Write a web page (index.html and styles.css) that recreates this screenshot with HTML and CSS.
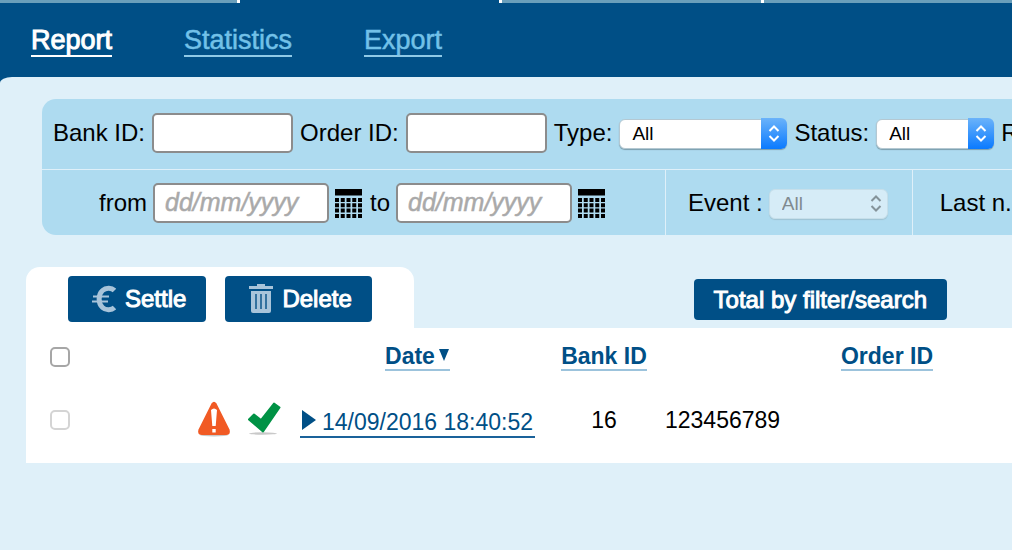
FILE: index.html
```html
<!DOCTYPE html>
<html lang="en">
<head>
<meta charset="utf-8">
<title>Report</title>
<link rel="stylesheet" href="styles.css">
</head>
<body>
<header class="header">
  <div class="top-tabs"><span class="top-tab"></span><span class="top-tab top-tab-active"></span><span class="top-tab"></span><span class="top-tab top-tab-last"></span></div>
  <nav class="nav">
    <a class="nav-link nav-current" href="#report">Report</a>
    <a class="nav-link" href="#statistics">Statistics</a>
    <a class="nav-link" href="#export">Export</a>
  </nav>
</header>
<main class="main">
  <form class="filters">
    <div class="filter-row">
      <label for="bank-id">Bank ID:</label>
      <input class="field" id="bank-id" type="text">
      <label for="order-id">Order ID:</label>
      <input class="field" id="order-id" type="text">
      <label for="type">Type:</label>
      <span class="picker picker-wide">
        <select class="select" id="type"><option>All</option></select>
        <svg class="picker-cap" viewBox="0 0 26 30" aria-hidden="true"><path d="M8.500 12.500 13 8 17.500 12.500M8.500 17.500 13 22 17.500 17.500"/></svg>
      </span>
      <label for="status">Status:</label>
      <span class="picker picker-narrow">
        <select class="select" id="status"><option>All</option></select>
        <svg class="picker-cap" viewBox="0 0 26 30" aria-hidden="true"><path d="M8.500 12.500 13 8 17.500 12.500M8.500 17.500 13 22 17.500 17.500"/></svg>
      </span>
      <span>R</span>
    </div>
    <div class="filter-row filter-row-split">
      <div class="cell cell-dates">
        <label for="from">from</label>
        <input class="field field-date" id="from" type="text" placeholder="dd/mm/yyyy">
        <button class="calendar" type="button" aria-label="Pick start date"><svg class="calendar-icon" viewBox="0 0 27 29"><path d="M0 0H27V6.500H0Z"/><path class="days" d="M0 11H27M0 16.300H27M0 21.600H27M0 26.900H27"/></svg></button>
        <label for="to">to</label>
        <input class="field field-date" id="to" type="text" placeholder="dd/mm/yyyy">
        <button class="calendar" type="button" aria-label="Pick end date"><svg class="calendar-icon" viewBox="0 0 27 29"><path d="M0 0H27V6.500H0Z"/><path class="days" d="M0 11H27M0 16.300H27M0 21.600H27M0 26.900H27"/></svg></button>
      </div>
      <div class="cell cell-event">
        <label for="event">Event :</label>
        <span class="picker picker-off">
          <select class="select" id="event" disabled><option>All</option></select>
          <svg class="picker-cap" viewBox="0 0 26 30" aria-hidden="true"><path d="M9.500 12.500 14 8 18.500 12.500M9.500 17.500 14 22 18.500 17.500"/></svg>
        </span>
      </div>
      <div class="cell cell-last">Last n.</div>
    </div>
  </form>

  <section class="results">
    <div class="toolbar">
      <div class="actions">
        <button class="button" type="button"><svg class="euro" viewBox="0 0 24 28" aria-hidden="true"><path class="euro-arc" d="M22.500 5.500C20 2.800 14 2.200 10.500 5.500C6 9.500 6 18.500 10.500 22.500C14 25.800 20 25 22.500 22.500"/><path class="euro-bars" d="M1 11.500H17M0 16.500H16"/></svg>Settle</button>
        <button class="button" type="button"><svg class="bin" viewBox="0 0 24 30" aria-hidden="true"><path class="bin-lid" d="M8 0H16V2H24V5H0V2H8Z"/><path class="bin-body" d="M2 7H22V27Q22 29 20 29H4Q2 29 2 27Z"/><path class="bin-slots" d="M7 10V25M12 10V25M17 10V25"/></svg>Delete</button>
      </div>
      <button class="button button-total" type="button">Total by filter/search</button>
    </div>
    <div class="table-wrap">
      <table class="table">
        <colgroup><col class="col-check"><col class="col-icons"><col class="col-date"><col class="col-bank"><col class="col-order"></colgroup>
        <thead>
          <tr>
            <th><input class="check" type="checkbox" aria-label="Select all"></th>
            <th></th>
            <th><a class="sort" href="#date">Date<svg class="arrow-down" viewBox="0 0 12 16" aria-hidden="true"><path d="M1 1H11L6 13Z"/></svg></a></th>
            <th><a class="sort" href="#bank">Bank ID</a></th>
            <th><a class="sort" href="#order">Order ID</a></th>
          </tr>
        </thead>
        <tbody>
          <tr>
            <td><input class="check" type="checkbox" aria-label="Select order 123456789" disabled></td>
            <td class="icons">
              <svg class="warning" viewBox="0 0 34 36" role="img" aria-label="Warning"><ellipse class="shade" cx="17" cy="34" rx="14" ry="1.500"/><path class="warning-body" d="M14.500 2.500Q17 -1 19.500 2.500L32.500 28.500Q34 34 29 34H5Q0 34 1.500 28.500Z"/><path class="mark" d="M14 9Q17 6 20 9L18.700 25H15.300ZM15.300 28H18.700V31.500H15.300Z"/></svg>
              <svg class="tick" viewBox="0 0 34 34" role="img" aria-label="Confirmed"><ellipse class="shade" cx="16" cy="31.500" rx="14" ry="1.200"/><path class="tick-body" d="M2 17.500 7 12.500 14 18 27 1.500 32.500 5.500 16 29.500Z"/></svg>
            </td>
            <td class="date"><a class="record" href="#record"><svg class="arrow-right" viewBox="0 0 14 20" aria-hidden="true"><path d="M0 0 14 10 0 20Z"/></svg>14/09/2016 18:40:52</a></td>
            <td>16</td>
            <td class="order">123456789</td>
          </tr>
        </tbody>
      </table>
    </div>
  </section>
</main>
</body>
</html>
```
FILE: styles.css
```css
* { box-sizing: border-box; }

body {
  margin: 0;
  min-height: 100vh;
  overflow: hidden;
  background: #004f86;
  color: #000;
  font-family: "Liberation Sans", Arial, sans-serif;
  font-size: 24px;
  line-height: 28px;
}

input, select, button { font-family: inherit; margin: 0; }

/* Header */
.top-tabs { display: flex; height: 3px; }
.top-tab { flex: 0 0 262px; background: #6a9fbb; border-right: 3px solid #fff; }
.top-tab:first-child { flex-basis: 240px; }
.top-tab-active { background: #004f86; }
.top-tab-last { flex: 1; border-right: 0; }

.nav { display: flex; gap: 72px; padding: 22px 31px 20px; }
.nav-link {
  color: #72c1e8;
  font-size: 27px;
  line-height: 30px;
  text-decoration: none;
  border-bottom: 2px solid #8fc9e6;
  -webkit-text-stroke: 0.5px currentColor;
}
.nav-current { color: #fff; border-color: #fff; -webkit-text-stroke-width: 1px; }

.main {
  min-height: calc(100vh - 77px);
  padding: 22px 0 40px;
  background: #dff0f9;
  border-top-left-radius: 12px 6px;
}

/* Filters */
.filters {
  margin-left: 42px;
  overflow: hidden;
  background: #aedbf0;
  border-radius: 14px 0 0 14px;
  white-space: nowrap;
}
.filter-row { display: flex; align-items: center; gap: 7px; height: 70px; padding: 0 0 3px 11px; }
.filter-row-split { align-items: stretch; gap: 0; height: 66px; padding: 0; border-top: 1px solid #dff0f9; }
.filter-row > *, .cell > * { flex: none; }

.cell { display: flex; align-items: center; }
.cell + .cell { border-left: 1px solid #dff0f9; }
.cell-dates { gap: 6px; padding: 0 58px 0 57px; }
.cell-event { gap: 6px; padding: 0 24px 0 22px; }
.cell-last { padding-left: 27px; }

.field {
  width: 141px;
  height: 40px;
  padding: 0 10px;
  border: 2px solid #8c8c8c;
  border-radius: 5px;
  background: #fff;
  font-size: 25px;
}
.field-date { width: 176px; }
.field::placeholder { color: #a9a9a9; font-style: italic; opacity: 1; -webkit-text-stroke: 0.5px #a9a9a9; }

.calendar { display: flex; padding: 2px 2px 0 0; border: 0; background: none; }
.calendar-icon { width: 27px; height: 29px; }
.days { fill: none; stroke: #000; stroke-width: 4; stroke-dasharray: 4 1.750; }

.picker { position: relative; display: flex; height: 32px; padding-top: 2px; }
.picker-wide { width: 168px; }
.picker-narrow { width: 118px; }
.picker-off { width: 119px; }
.select {
  width: 100%;
  padding: 0 12px;
  appearance: none;
  border: 1px solid #b4c8d2;
  border-radius: 6px;
  background: #fff;
  color: #000;
  font-size: 19px;
  box-shadow: 0 1px 1px #7b9dac;
}
.select:disabled { background: #d6ecf7; color: #808a8f; border-color: #c6dfea; opacity: 1; box-shadow: 0 1px 1px #9fc3d3; }
.picker-cap {
  position: absolute;
  bottom: 0;
  right: 0;
  width: 26px;
  height: 31px;
  border-radius: 0 6px 6px 0;
  background: linear-gradient(#6bb3fa, #0a7aff);
  fill: none;
  stroke: #fff;
  stroke-width: 2;
  pointer-events: none;
}
.picker-off .picker-cap { background: none; stroke: #84939a; }

/* Results */
.results { margin: 32px 0 0 26px; }
.toolbar { display: flex; align-items: flex-start; }
.actions { display: flex; gap: 19px; padding: 9px 42px 6px 42px; background: #fff; border-radius: 14px 14px 0 0; }
.button {
  display: flex;
  align-items: center;
  height: 46px;
  padding: 0 20px 0 24px;
  border: 0;
  border-radius: 4px;
  background: #004f86;
  color: #fff;
  font-size: 24px;
  white-space: nowrap;
  -webkit-text-stroke: 1px #fff;
}
.button-total { height: 41px; margin: 12px 65px 0 auto; padding: 0 20px; }
.euro { width: 24px; height: 28px; margin-right: 9px; fill: none; stroke: #a8c4da; }
.euro-arc { stroke-width: 5; }
.euro-bars { stroke-width: 2; }
.bin { width: 24px; height: 30px; margin-right: 9px; fill: #a8c4da; }
.bin-slots { stroke: #33719e; stroke-width: 2; }

.table-wrap { overflow: hidden; background: #fff; }
.table { width: 1083px; table-layout: fixed; border-collapse: collapse; font-size: 23px; }
.col-check { width: 68px; }
.col-icons { width: 198px; }
.col-date { width: 251px; }
.col-bank { width: 122px; }
.table th, .table td { padding: 0; text-align: center; vertical-align: middle; white-space: nowrap; }
.table th { height: 57px; }
.table td { height: 78px; padding-bottom: 8px; }
.table .order { text-align: left; }
.table .date { padding-bottom: 2px; }
.table .icons { padding: 0 11px 10px 0; text-align: right; }

.check {
  appearance: none;
  display: block;
  width: 20px;
  height: 20px;
  margin: 0 auto;
  border: 2px solid #a6a6a6;
  border-radius: 5px;
  background: #fff;
}
.check:disabled { border-color: #d4d4d4; }

.sort { display: inline-block; color: #004f86; line-height: 26px; text-decoration: none; border-bottom: 2px solid #9cc3dc; }
.arrow-down { width: 12px; height: 16px; margin-left: 3px; fill: #004f86; }
.record { display: inline-block; padding: 0 2px; color: #004f86; text-decoration: none; border-bottom: 2px solid #1a629a; }
.arrow-right { width: 14px; height: 20px; margin-right: 6px; fill: #004f86; }

.warning { width: 34px; height: 36px; margin-right: 10px; vertical-align: middle; }
.warning-body { fill: #f15a24; }
.mark { fill: #fff; }
.tick { width: 34px; height: 34px; vertical-align: middle; }
.tick-body { fill: #009245; stroke: #009245; stroke-width: 2; stroke-linejoin: round; }
.shade { fill: #c9c9c9; }
```
